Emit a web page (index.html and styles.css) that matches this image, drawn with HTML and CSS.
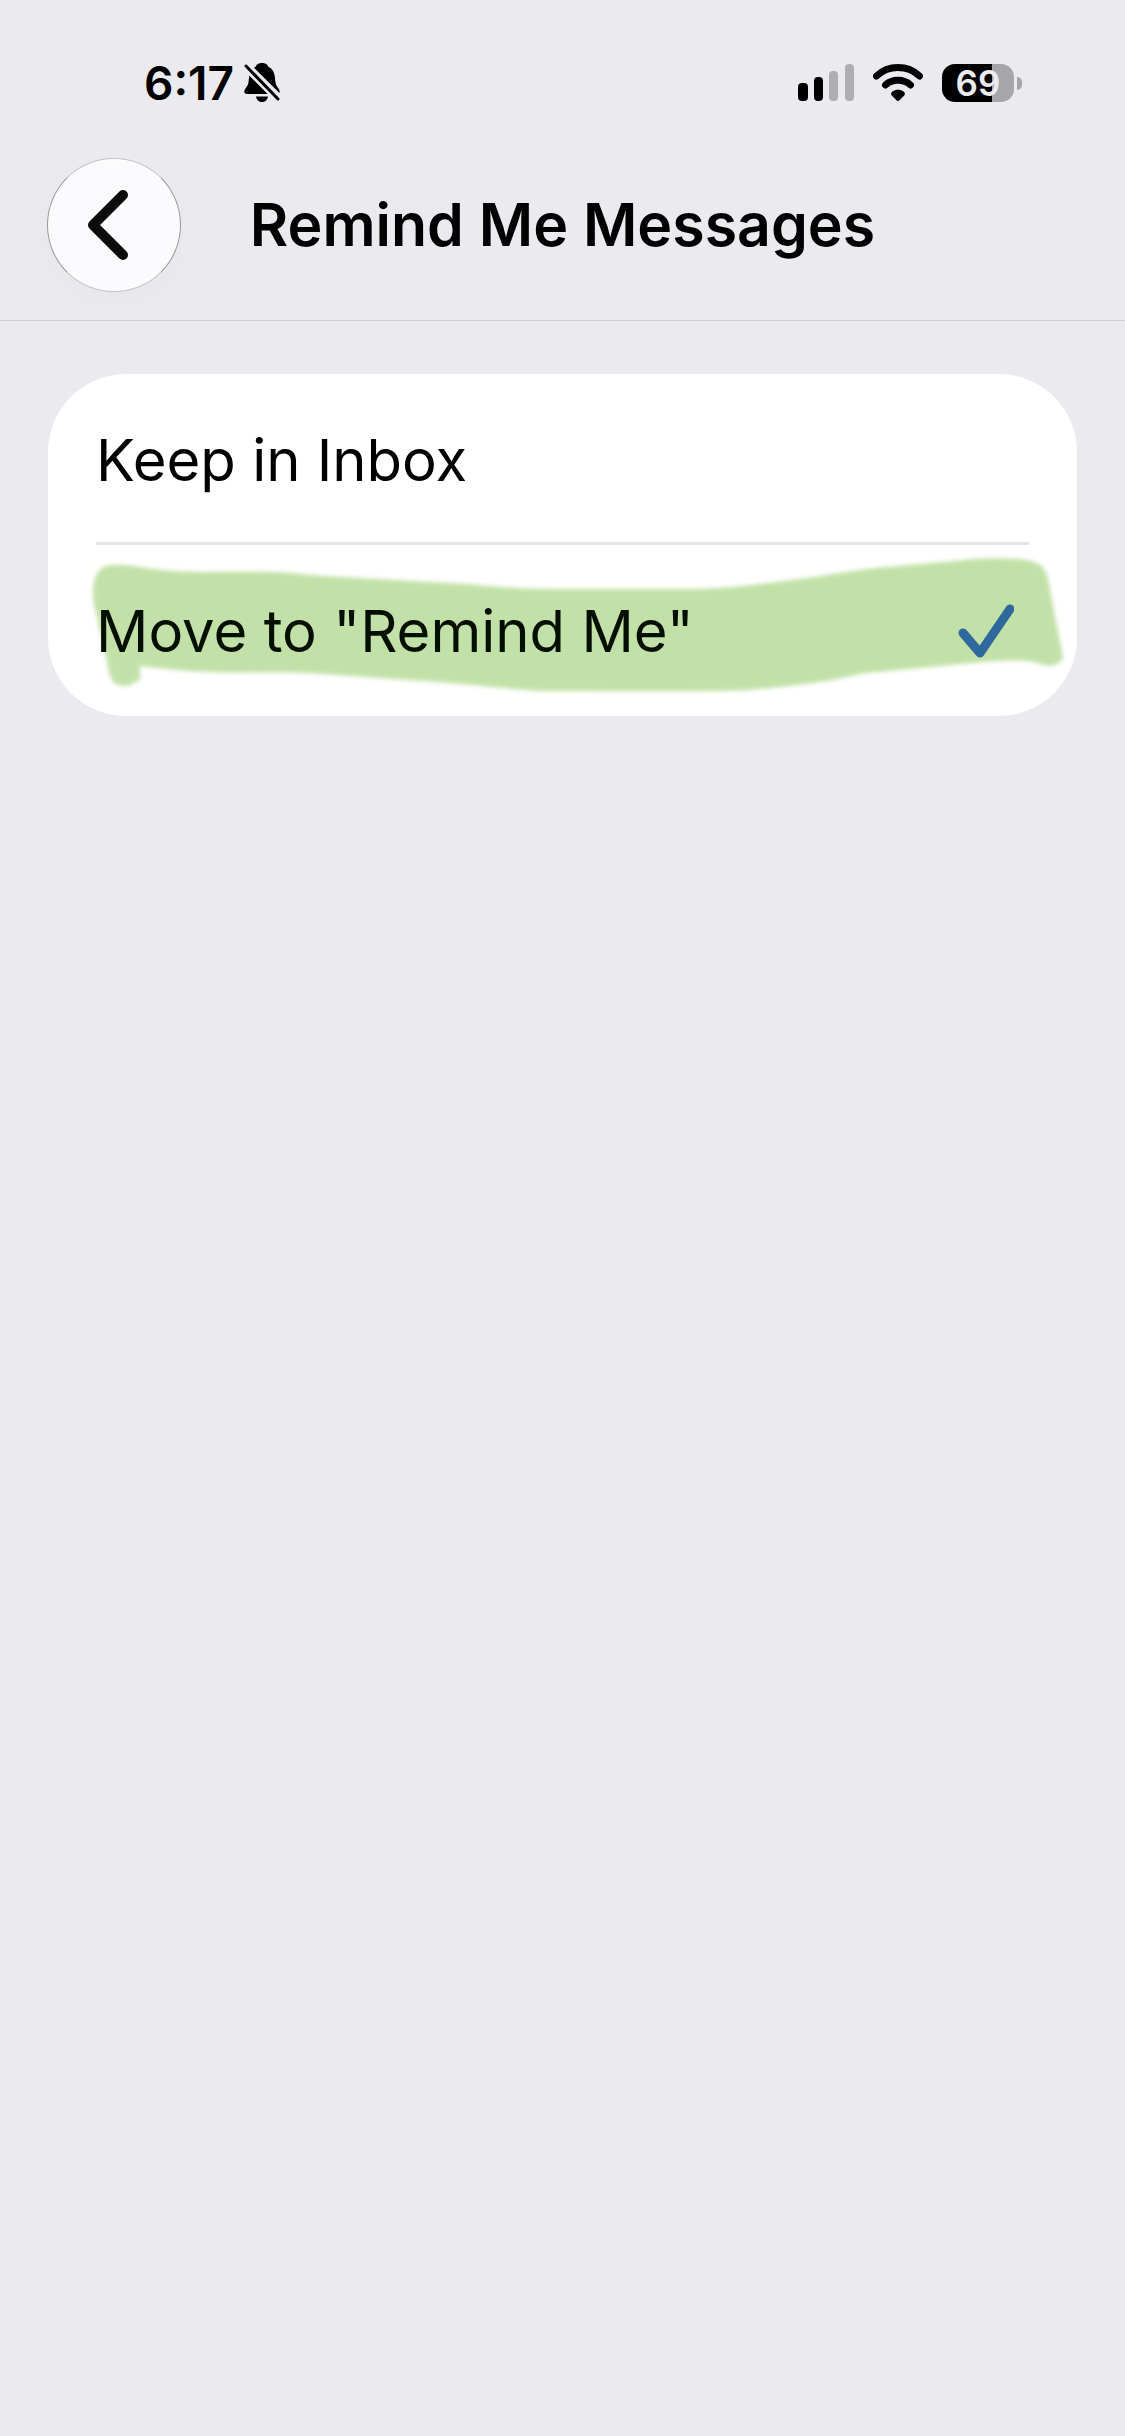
FILE: index.html
```html
<!DOCTYPE html>
<html lang="en">
<head>
<meta charset="utf-8">
<meta name="viewport" content="width=device-width, initial-scale=1">
<title>Remind Me Messages</title>
<link rel="stylesheet" href="styles.css">
</head>
<body>
<header class="header">
  <div class="status">
    <div class="status-left">
      <time class="clock">6:17</time>
      <svg class="bell" viewBox="0 0 36 40" aria-hidden="true">
        <path d="M18 0C13.500 0 12 2.500 11.500 4C7 6 5.500 10 5 15C4.500 21 4 22 1.500 25.500C-.5 28 0 31 3 31H33C36 31 36.500 28 34.500 25.500C32 22 31.500 21 31 15C30.500 10 29 6 24.500 4C24 2.500 22.500 0 18 0Z"/>
        <path d="M12 33.500H24C23.500 37 21 39 18 39S12.500 37 12 33.500Z"/>
        <path class="bell-gap" d="M-1 0L36 37"/>
        <path class="bell-slash" d="M2 3L34 36"/>
      </svg>
    </div>
    <div class="status-right">
      <svg class="signal" viewBox="0 0 56 38" aria-hidden="true">
        <rect x="0" y="19" width="10" height="18" rx="4"/>
        <rect x="16" y="13" width="9" height="24" rx="4"/>
        <rect class="dim" x="31" y="7" width="9" height="30" rx="4"/>
        <rect class="dim" x="47" y="0" width="9" height="37" rx="4"/>
      </svg>
      <svg class="wifi" viewBox="0 0 50 38" aria-hidden="true">
        <path class="arc" d="M3.500 12C15.500 .8 34.500 .8 46.500 12"/>
        <path class="arc" d="M12.500 21C19.500 14.800 30.500 14.800 37.500 21"/>
        <path d="M19.500 27.500C22.500 25.300 27.500 25.300 30.500 27.500C32.300 28.800 32.300 30.500 31 31.800L26.500 36.200C25.500 37.200 24.500 37.200 23.500 36.200L19 31.800C17.700 30.500 17.700 28.800 19.500 27.500Z"/>
      </svg>
      <div class="battery"><span class="battery-level">69</span><span class="battery-cap"></span></div>
    </div>
  </div>
  <nav class="nav">
    <button class="back" type="button" aria-label="Back">
      <svg class="chevron" viewBox="0 0 42 70" aria-hidden="true"><path d="M36 5L6 35L36 65"/></svg>
    </button>
    <h1 class="title">Remind Me Messages</h1>
  </nav>
</header>
<main class="content">
  <form class="card">
    <svg class="marker" viewBox="0 0 1029 342" preserveAspectRatio="none" aria-hidden="true">
      <path d="M45 219C45 201 52 191 65 191C84 190 105 196 125 197C160 199 190 197 225 198C250 199 270 202 292 203L419 210C450 213 475 215 502 215H652C675 214 700 212 719 209C750 206 785 200 812 196C850 191 890 189 925 185C941 184 960 184 972 185C985 187 993 189 997 197C1001 203 1006 240 1010 257L1015 284C1014 288 1007 291 1002 292C994 291 987 288 979 287C965 286 950 287 935 288L819 299C804 301 792 305 779 307C752 311 725 314 702 316C665 318 570 317 502 317C465 316 430 311 402 309L275 300C230 297 195 300 159 298C135 297 112 294 92 292V306C87 307 84 311 79 312C73 312 67 311 64 306C60 298 60 289 57 279C54 260 51 257 50 246C47 235 45 230 45 219Z"/>
    </svg>
    <label class="row">
      <span class="row-text">Keep in Inbox</span>
      <input class="choice" type="radio" name="destination" value="inbox">
      <svg class="check" viewBox="0 0 56 54" aria-hidden="true"><path d="M5 29L22 49L52 5"/></svg>
    </label>
    <label class="row">
      <span class="row-text">Move to "Remind Me"</span>
      <input class="choice" type="radio" name="destination" value="remind" checked>
      <svg class="check" viewBox="0 0 56 54" aria-hidden="true"><path d="M5 29L22 49L52 5"/></svg>
    </label>
  </form>
</main>
</body>
</html>
```
FILE: styles.css
```css
* {
  box-sizing: border-box;
}

body {
  margin: 0;
  min-height: 100vh;
  background: #eaeaef;
  color: #000;
  font-family: Inter, "Liberation Sans", sans-serif;
}

.header {
  display: flex;
  flex-direction: column;
  gap: 42px;
  padding: 50px 47px 28px;
  border-bottom: 1px solid #d0d0d5;
}

.status {
  display: flex;
  align-items: center;
  justify-content: space-between;
  height: 66px;
  padding: 0 56px 0 97px;
}

.status-left,
.status-right {
  display: flex;
  align-items: center;
}

.status-left {
  gap: 10px;
}

.status-right {
  gap: 19px;
}

.clock {
  font-size: 46px;
  line-height: 56px;
  font-weight: 600;
}

.bell {
  width: 36px;
  height: 40px;
  overflow: visible;
}

.bell-gap,
.bell-slash {
  fill: none;
  stroke-linecap: round;
}

.bell-gap {
  stroke: #eaeaef;
  stroke-width: 9px;
}

.bell-slash {
  stroke: #000;
  stroke-width: 3px;
}

.signal {
  width: 56px;
  height: 38px;
}

.dim {
  fill: #afafb3;
}

.wifi {
  width: 50px;
  height: 38px;
}

.arc {
  fill: none;
  stroke: #000;
  stroke-width: 7px;
  stroke-linecap: round;
}

.battery {
  display: flex;
  align-items: center;
  gap: 3px;
}

.battery-level {
  width: 72px;
  border-radius: 13px;
  background: linear-gradient(90deg, #000 70%, #a5a5aa 70%);
  color: #eaeaef;
  font-size: 35px;
  line-height: 38px;
  font-weight: 600;
  text-align: center;
}

.battery-cap {
  width: 5px;
  height: 13px;
  border-radius: 0 5px 5px 0;
  background: #a5a5aa;
}

.nav {
  display: grid;
  grid-template-columns: 134px 1fr 134px;
  align-items: center;
}

.back {
  display: flex;
  align-items: center;
  justify-content: center;
  width: 134px;
  height: 134px;
  padding: 0 12px 0 0;
  border: 1px solid;
  border-color: #c4c4c8 #98989c;
  border-radius: 50%;
  background: #fbfbfd;
  box-shadow: inset 0 0 6px #fff, 0 12px 36px rgba(0, 0, 0, 0.02);
}

.chevron {
  width: 42px;
  height: 70px;
}

.chevron path {
  fill: none;
  stroke: #0c0c0d;
  stroke-width: 10px;
  stroke-linecap: round;
  stroke-linejoin: round;
}

.title {
  margin: 0;
  font-size: 59px;
  line-height: 74px;
  font-weight: 600;
  text-align: center;
  white-space: nowrap;
}

.content {
  padding: 53px 48px;
}

.card {
  position: relative;
  padding: 0 48px;
  border-radius: 78px;
  background: #fff;
}

.marker {
  position: absolute;
  inset: 0;
  width: 100%;
  height: 100%;
  fill: #c2e1a8;
  filter: blur(2px);
}

.row {
  position: relative;
  display: flex;
  align-items: center;
  justify-content: space-between;
  height: 171px;
  padding-right: 15px;
}

.row + .row {
  color: #050f00;
}

.row:first-of-type {
  padding-top: 3px;
  border-bottom: 3px solid #e5e5e5;
}

.row-text {
  font-size: 58px;
  line-height: 74px;
}

.choice {
  position: absolute;
  right: 15px;
  width: 56px;
  height: 54px;
  margin: 0;
  appearance: none;
}

.check {
  display: none;
  width: 56px;
  height: 54px;
  fill: none;
  stroke: #2f689c;
  stroke-width: 9px;
  stroke-linecap: round;
  stroke-linejoin: round;
}

.choice:checked + .check {
  display: block;
}
```
